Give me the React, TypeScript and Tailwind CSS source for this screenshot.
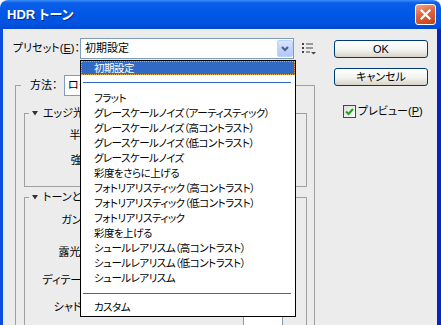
import React from "react";

const presets = [
  "フラット",
  "グレースケールノイズ（アーティスティック）",
  "グレースケールノイズ（高コントラスト）",
  "グレースケールノイズ（低コントラスト）",
  "グレースケールノイズ",
  "彩度をさらに上げる",
  "フォトリアリスティック（高コントラスト）",
  "フォトリアリスティック（低コントラスト）",
  "フォトリアリスティック",
  "彩度を上げる",
  "シュールレアリスム（高コントラスト）",
  "シュールレアリスム（低コントラスト）",
  "シュールレアリスム",
];

function Triangle() {
  return (
    <svg width="6" height="5" viewBox="0 0 6 5" className="shrink-0">
      <path d="M0 0h6L3 4.5z" fill="#333" />
    </svg>
  );
}

function ListIcon() {
  return (
    <svg width="14" height="12" viewBox="0 0 14 12">
      <rect x="0" y="0" width="2" height="2" fill="#444" />
      <rect x="4" y="0.5" width="7" height="1" fill="#444" />
      <rect x="0" y="4" width="2" height="2" fill="#444" />
      <rect x="4" y="4.5" width="7" height="1" fill="#444" />
      <rect x="0" y="8" width="2" height="2" fill="#444" />
      <rect x="4" y="8.5" width="4" height="1" fill="#444" />
      <path d="M9 9h5l-2.5 2.5z" fill="#444" />
    </svg>
  );
}

function Field({ label, last }: { label: string; last?: boolean }) {
  return (
    <div className={`flex h-[20px] ${last ? "items-start" : "items-center"}`}>
      <span className="w-[72px] text-right whitespace-nowrap leading-[20px]">{label}</span>
      <div className="flex-1 mx-[6px] h-[2px] bg-[#a0a0a0]" />
      <div className={`w-[40px] h-[20px] mr-[23px] border border-[#7f9db9] bg-white ${last ? "mt-[17px]" : ""}`} />
    </div>
  );
}

function Button({ children }: { children: React.ReactNode }) {
  return (
    <div className="h-[18px] w-[94px] rounded-[3px] border border-[#003c74] bg-[linear-gradient(180deg,#ffffff,#f3f3ef_55%,#d8d3c9)] flex items-center justify-center text-[11px] leading-none">
      {children}
    </div>
  );
}

export default function App() {
  return (
    <div className="w-[441px] h-[325px] bg-white overflow-hidden font-['Liberation_Sans','Noto_Sans_CJK_JP',sans-serif] text-[11px] text-black [font-feature-settings:'palt']">
      <div className="h-full flex flex-col rounded-t-[8px] overflow-hidden">
        {/* title bar */}
        <div className="h-[29px] shrink-0 flex items-center justify-between pl-[7px] pr-[5px] bg-[linear-gradient(180deg,#3d8ef9_0%,#0a5fe9_10%,#0058e6_50%,#0052df_85%,#0046d2_100%)]">
          <span className="text-white font-bold text-[13px] [text-shadow:1px_1px_0_#0a2a8a]">HDR トーン</span>
          <div className="w-[21px] h-[21px] rounded-[3px] border border-white bg-[linear-gradient(160deg,#f2a387,#e0643d_45%,#c53e1a)] flex items-center justify-center">
            <svg width="11" height="11" viewBox="0 0 11 11">
              <path d="M1.5 1.5l8 8M9.5 1.5l-8 8" stroke="#fff" strokeWidth="2.2" strokeLinecap="square" />
            </svg>
          </div>
        </div>

        {/* body */}
        <div className="flex-1 flex border-l-[3px] border-l-[#0a4de0] border-r-[4px] border-r-[#0a22c0] bg-[#ececec] pl-[10px] pt-[9px] overflow-hidden">
          <div className="w-[303px] flex flex-col shrink-0">
            <div className="flex items-center h-[21px]">
              <span className="w-[67px] whitespace-nowrap">
                プリセット(<u>E</u>)：
              </span>
              <div className="relative w-[215px] h-[21px] border border-[#7f9db9] bg-white flex items-center pl-[4px]">
                <span>初期設定</span>
                <div className="ml-auto w-[16px] h-[17px] rounded-[2px] border border-[#bcd0f8] bg-[linear-gradient(180deg,#dce6fd,#c1d3fb_50%,#b3c8fa)] flex items-center justify-center">
                  <svg width="8" height="6" viewBox="0 0 8 6">
                    <path d="M1 1l3 3 3-3" stroke="#4d6185" strokeWidth="2" fill="none" />
                  </svg>
                </div>

                {/* open dropdown list */}
                <div className="absolute left-[-1px] top-[21px] w-[216px] h-[257px] border border-black bg-white z-10 flex flex-col text-[10.5px] tracking-[-0.5px]">
                  <div className="h-[14px] bg-[#316ac5] border border-dotted border-[#e3a94a] text-white pl-[12px] leading-[12px]">
                    初期設定
                  </div>
                  <div className="h-[16px] pt-[7px] pl-[2px] pr-[4px]">
                    <div className="h-[1px] bg-[#316ac5]" />
                  </div>
                  {presets.map((p) => (
                    <div key={p} className="h-[15px] leading-[15px] pl-[13px] whitespace-nowrap">
                      {p}
                    </div>
                  ))}
                  <div className="h-[14px] pt-[7px] pl-[2px] pr-[4px]">
                    <div className="h-[1px] bg-[#316ac5]" />
                  </div>
                  <div className="h-[15px] leading-[15px] pl-[13px]">カスタム</div>
                </div>
              </div>
              <div className="ml-[8px] flex items-center">
                <ListIcon />
              </div>
            </div>

            <fieldset className="mt-[16px] ml-[2px] w-[300px] border border-[#a0a0a0] pl-[8px] pr-[7px] pt-[11px] pb-[20px]">
              <legend className="ml-[-3px] pl-[9px] pr-[4px]">
                <div className="flex items-center h-[21px]">
                  <span className="w-[34px] whitespace-nowrap">方法：</span>
                  <div className="w-[160px] h-[21px] border border-[#7f9db9] bg-white flex items-center pl-[3px]">
                    ローカル適応
                  </div>
                </div>
              </legend>

              <fieldset className="w-[283px] border border-[#a0a0a0] pt-[6px] pb-[16px]">
                <legend className="ml-[4px] px-[3px]">
                  <div className="flex items-center gap-[5px] h-[12px]">
                    <Triangle />
                    <span>エッジ光彩</span>
                  </div>
                </legend>
                <div className="flex flex-col gap-[5px]">
                  <Field label="半径：" />
                  <Field label="強さ：" />
                </div>
              </fieldset>

              <fieldset className="mt-[4px] w-[283px] border border-[#a0a0a0] pt-[7px] pb-[20px]">
                <legend className="ml-[4px] px-[3px]">
                  <div className="flex items-center gap-[5px] h-[12px]">
                    <Triangle />
                    <span>トーンとディテール</span>
                  </div>
                </legend>
                <div className="flex flex-col">
                  <Field label="ガンマ：" />
                  <div className="mt-[12px]">
                    <Field label="露光量：" />
                  </div>
                  <div className="mt-[8px]">
                    <Field label="ディテール：" />
                  </div>
                  <div className="mt-[7px]">
                    <Field label="シャドウ：" last />
                  </div>
                </div>
              </fieldset>
            </fieldset>
          </div>

          <div className="ml-[18px] mt-[2px] flex flex-col w-[94px] shrink-0">
            <Button>OK</Button>
            <div className="mt-[10px]">
              <Button>キャンセル</Button>
            </div>
            <div className="mt-[17px] ml-[9px] flex items-center gap-[2px] text-[11px]">
              <div className="w-[13px] h-[13px] border border-[#1c5180] bg-[linear-gradient(135deg,#dcdcd7,#ffffff)] flex items-center justify-center">
                <svg width="9" height="9" viewBox="0 0 9 9">
                  <path d="M1 4.5l2.5 2.5L8 2" stroke="#21a121" strokeWidth="2" fill="none" />
                </svg>
              </div>
              <span className="whitespace-nowrap">
                プレビュー(<u>P</u>)
              </span>
            </div>
          </div>
        </div>
      </div>
    </div>
  );
}
